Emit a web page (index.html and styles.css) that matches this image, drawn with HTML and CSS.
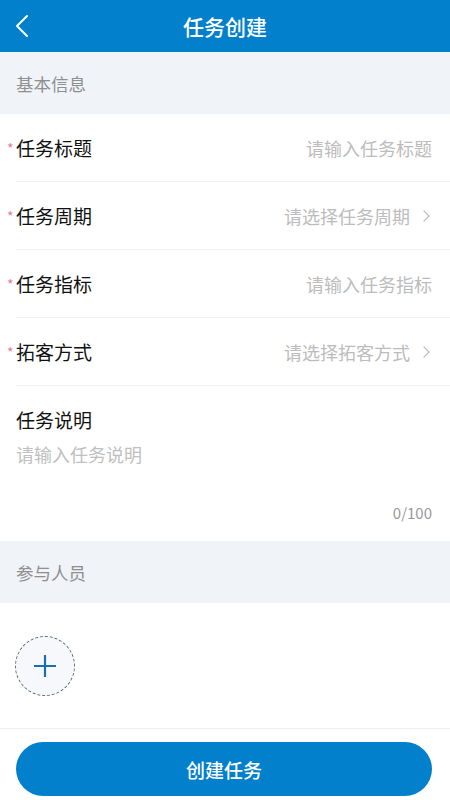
FILE: index.html
```html
<!DOCTYPE html>
<html>

<head>
  <meta charset="utf-8">
  <meta name="viewport" content="width=device-width">
  <title>任务创建</title>
  <link rel="stylesheet" href="styles.css">
</head>

<body>

  <div class="topbar">
    <span class="back">
      <svg width="14" height="24" viewBox="0 0 14 24"><path d="M12 2 L2 12 L12 22" fill="none" stroke="#fff" stroke-width="2" stroke-linecap="round" stroke-linejoin="round"/></svg>
    </span>
    <h1>任务创建</h1>
  </div>

  <div class="section-title">基本信息</div>

  <div class="form">
    <div class="row">
      <span class="label"><i class="req">*</i>任务标题</span>
      <span class="value">请输入任务标题</span>
    </div>
    <div class="row">
      <span class="label"><i class="req">*</i>任务周期</span>
      <span class="value">请选择任务周期<span class="arrow"></span></span>
    </div>
    <div class="row">
      <span class="label"><i class="req">*</i>任务指标</span>
      <span class="value">请输入任务指标</span>
    </div>
    <div class="row">
      <span class="label"><i class="req">*</i>拓客方式</span>
      <span class="value">请选择拓客方式<span class="arrow"></span></span>
    </div>
    <div class="desc">
      <div class="label">任务说明</div>
      <div class="placeholder">请输入任务说明</div>
      <div class="counter">0/100</div>
    </div>
  </div>

  <div class="section-title">参与人员</div>

  <div class="members">
    <div class="add-btn">
      <svg width="24" height="24" viewBox="0 0 24 24"><path d="M12 1 V23 M1 12 H23" stroke="#1a6fb0" stroke-width="2.2"/></svg>
    </div>
  </div>

  <div class="footer">
    <button class="submit">创建任务</button>
  </div>

</body>

</html>
```

FILE: styles.css
```css
body {
  margin: 0;
  font-family: "Noto Sans CJK SC", "Noto Sans", sans-serif;
  background: #ffffff;
  color: #222222;
}

.topbar {
  height: 52px;
  background: #0280cb;
  display: flex;
  align-items: center;
  justify-content: center;
  position: relative;
}

.topbar h1 {
  margin: 0;
  color: #ffffff;
  font-size: 21px;
  font-weight: 500;
}

.back {
  position: absolute;
  left: 15px;
  top: 14px;
  display: flex;
}

.section-title {
  height: 62px;
  background: #f0f3f8;
  color: #8f8f8f;
  font-size: 17.5px;
  display: flex;
  align-items: center;
  padding-left: 16px;
}

.form {
  padding-left: 16px;
}

.row {
  height: 68px;
  border-bottom: 1px solid #f0f0f0;
  display: flex;
  align-items: center;
  justify-content: space-between;
  padding-right: 18px;
  box-sizing: border-box;
}

.label {
  font-size: 19px;
  color: #111111;
  position: relative;
}

.req {
  position: absolute;
  left: -9px;
  top: 4px;
  font-style: normal;
  color: #e47c8a;
  font-size: 14px;
}

.value {
  font-size: 18px;
  color: #bcbcbc;
  display: flex;
  align-items: center;
}

.arrow {
  width: 7px;
  height: 7px;
  border-top: 1.5px solid #b5b5b5;
  border-right: 1.5px solid #b5b5b5;
  transform: rotate(45deg);
  margin-left: 10px;
  margin-right: 4px;
}

.desc {
  height: 155px;
  padding: 20px 18px 0 0;
  box-sizing: border-box;
}

.placeholder {
  font-size: 18px;
  color: #c0c0c0;
  margin-top: 8px;
}

.counter {
  text-align: right;
  font-size: 15px;
  color: #999999;
  margin-top: 35px;
}

.members {
  height: 126px;
  border-bottom: 1px solid #eeeeee;
  display: flex;
  align-items: center;
  padding-left: 15px;
  box-sizing: border-box;
}

.add-btn {
  width: 60px;
  height: 60px;
  border-radius: 50%;
  border: 1.5px dashed #56687a;
  background: #f6f8fb;
  box-sizing: border-box;
  display: flex;
  align-items: center;
  justify-content: center;
}

.footer {
  padding: 13px 18px 0 16px;
}

.submit {
  width: 100%;
  height: 54px;
  border: none;
  border-radius: 27px;
  background: #0280cb;
  color: #ffffff;
  font-family: inherit;
  font-size: 19px;
  font-weight: 500;
}
```
